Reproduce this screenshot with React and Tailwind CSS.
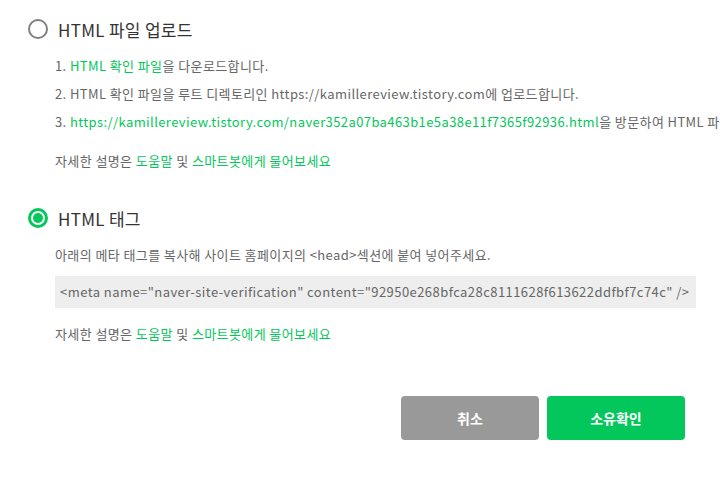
export default function App() {
  const font = { fontFamily: '"Noto Sans CJK KR", "Noto Sans", sans-serif' };
  return (
    <div className="w-[720px] h-[480px] bg-white overflow-hidden relative" style={font}>
      <div className="pl-[28px] pt-[19px]">
        {/* Option 1 */}
        <div className="flex items-center h-[20px]">
          <span className="w-[20px] h-[20px] rounded-full border-2 border-[#808080] bg-white" />
          <span className="ml-[10px] text-[17px] text-[#333] leading-none tracking-[0.3px]">HTML 파일 업로드</span>
        </div>
        <div className="pl-[27px] mt-[13px] text-[13px] text-[#666] leading-[28px] whitespace-nowrap tracking-[0.4px]">
          <div>1. <span className="text-[#03c75a]">HTML 확인 파일</span>을 다운로드합니다.</div>
          <div>2. HTML 확인 파일을 루트 디렉토리인 https://kamillereview.tistory.com에 업로드합니다.</div>
          <div>3. <span className="text-[#03c75a]">https://kamillereview.tistory.com/naver352a07ba463b1e5a38e11f7365f92936.html</span>을 방문하여 HTML 파일이 정상적으로 보이는지 확인합니다.</div>
          <div className="mt-[11px]">자세한 설명은 <span className="text-[#03c75a]">도움말</span> 및 <span className="text-[#03c75a]">스마트봇에게 물어보세요</span></div>
        </div>

        {/* Option 2 */}
        <div className="flex items-center h-[20px] mt-[33px]">
          <span className="w-[20px] h-[20px] rounded-full border-[3px] border-[#03c75a] bg-white flex items-center justify-center">
            <span className="w-[10px] h-[10px] rounded-full bg-[#03c75a]" />
          </span>
          <span className="ml-[10px] text-[17px] text-[#333] leading-none tracking-[0.3px]">HTML 태그</span>
        </div>
        <div className="pl-[27px] mt-[17px] text-[13px] text-[#666] whitespace-nowrap tracking-[0.4px]">
          <div className="leading-[20px]">아래의 메타 태그를 복사해 사이트 홈페이지의 &lt;head&gt;섹션에 붙여 넣어주세요.</div>
          <div className="mt-[11px] w-[641px] h-[32px] bg-[#eeeeee] flex items-center px-[5px] text-[#666] tracking-[0.44px]">
            &lt;meta name="naver-site-verification" content="92950e268bfca28c8111628f613622ddfbf7c74c" /&gt;
          </div>
          <div className="mt-[16px] leading-[20px]">자세한 설명은 <span className="text-[#03c75a]">도움말</span> 및 <span className="text-[#03c75a]">스마트봇에게 물어보세요</span></div>
        </div>
      </div>

      <div className="flex justify-end gap-[8px] pr-[35px] mt-[52px]">
        <button className="w-[138px] h-[44px] rounded-[4px] bg-[#999999] text-white text-[14px] font-bold">취소</button>
        <button className="w-[138px] h-[44px] rounded-[4px] bg-[#03c75a] text-white text-[14px] font-bold">소유확인</button>
      </div>
    </div>
  );
}
